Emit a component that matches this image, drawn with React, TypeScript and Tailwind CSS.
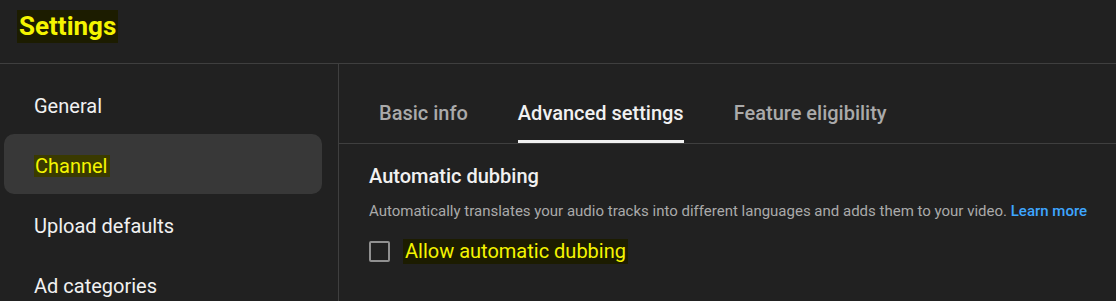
import React from 'react';

const NAV = ['General', 'Channel', 'Upload defaults', 'Ad categories'];
const TABS = ['Basic info', 'Advanced settings', 'Feature eligibility'];

export default function App() {
  return (
    <div
      className="w-[1116px] h-[301px] overflow-hidden bg-[#212121] text-[#f1f1f1]"
      style={{ fontFamily: 'Roboto, "Noto Sans", sans-serif' }}
    >
      {/* header */}
      <div className="h-[64px] border-b border-[#3f3f3f] flex items-start pl-[17px] pt-[10px]">
        <span className="bg-[#1c1c00] text-[#f5f500] text-[26px] font-bold leading-[33px] px-[2px]">
          Settings
        </span>
      </div>

      <div className="flex h-[237px]">
        {/* sidebar */}
        <aside className="w-[339px] shrink-0 border-r border-[#3f3f3f] pt-[10px] pl-[4px] pr-[16px]">
          {NAV.map((item) => {
            const active = item === 'Channel';
            return (
              <div
                key={item}
                className={`h-[60px] flex items-center pl-[30px] pt-[3px] rounded-[10px] text-[20px] ${
                  active ? 'bg-[#383838]' : ''
                }`}
              >
                {active ? (
                  <span className="bg-[#3a3a00] text-[#f5f500] leading-[22px] pl-[1px] pr-[3px]">{item}</span>
                ) : (
                  <span>{item}</span>
                )}
              </div>
            );
          })}
        </aside>

        {/* main */}
        <main className="flex-1">
          <div className="h-[80px] border-b border-[#3f3f3f] flex items-end gap-[50px] pl-[40px]">
            {TABS.map((tab) => {
              const active = tab === 'Advanced settings';
              return (
                <div key={tab} className="flex flex-col">
                  <span
                    className={`text-[20px] font-medium leading-6 ${
                      active ? 'text-[#f1f1f1]' : 'text-[#aaaaaa]'
                    }`}
                  >
                    {tab}
                  </span>
                  <div className={`mt-[15px] h-[3px] ${active ? 'bg-[#f1f1f1]' : ''}`} />
                </div>
              );
            })}
          </div>

          <div className="pl-[30px] pt-[20px]">
            <div className="text-[20px] font-medium leading-6">Automatic dubbing</div>
            <div className="mt-[13px] text-[15px] leading-5 text-[#aaaaaa]">
              Automatically translates your audio tracks into different languages and adds them to your video.{' '}
              <span className="text-[#3ea6ff] font-medium">Learn more</span>
            </div>
            <div className="mt-[18px] flex items-center h-6">
              <div className="w-[21px] h-[21px] border-2 border-[#909090] rounded-[2px]" />
              <span className="ml-[13px] bg-[#1c1c00] text-[#f5f500] text-[20px] leading-[25px] px-[2px]">
                Allow automatic dubbing
              </span>
            </div>
          </div>
        </main>
      </div>
    </div>
  );
}
